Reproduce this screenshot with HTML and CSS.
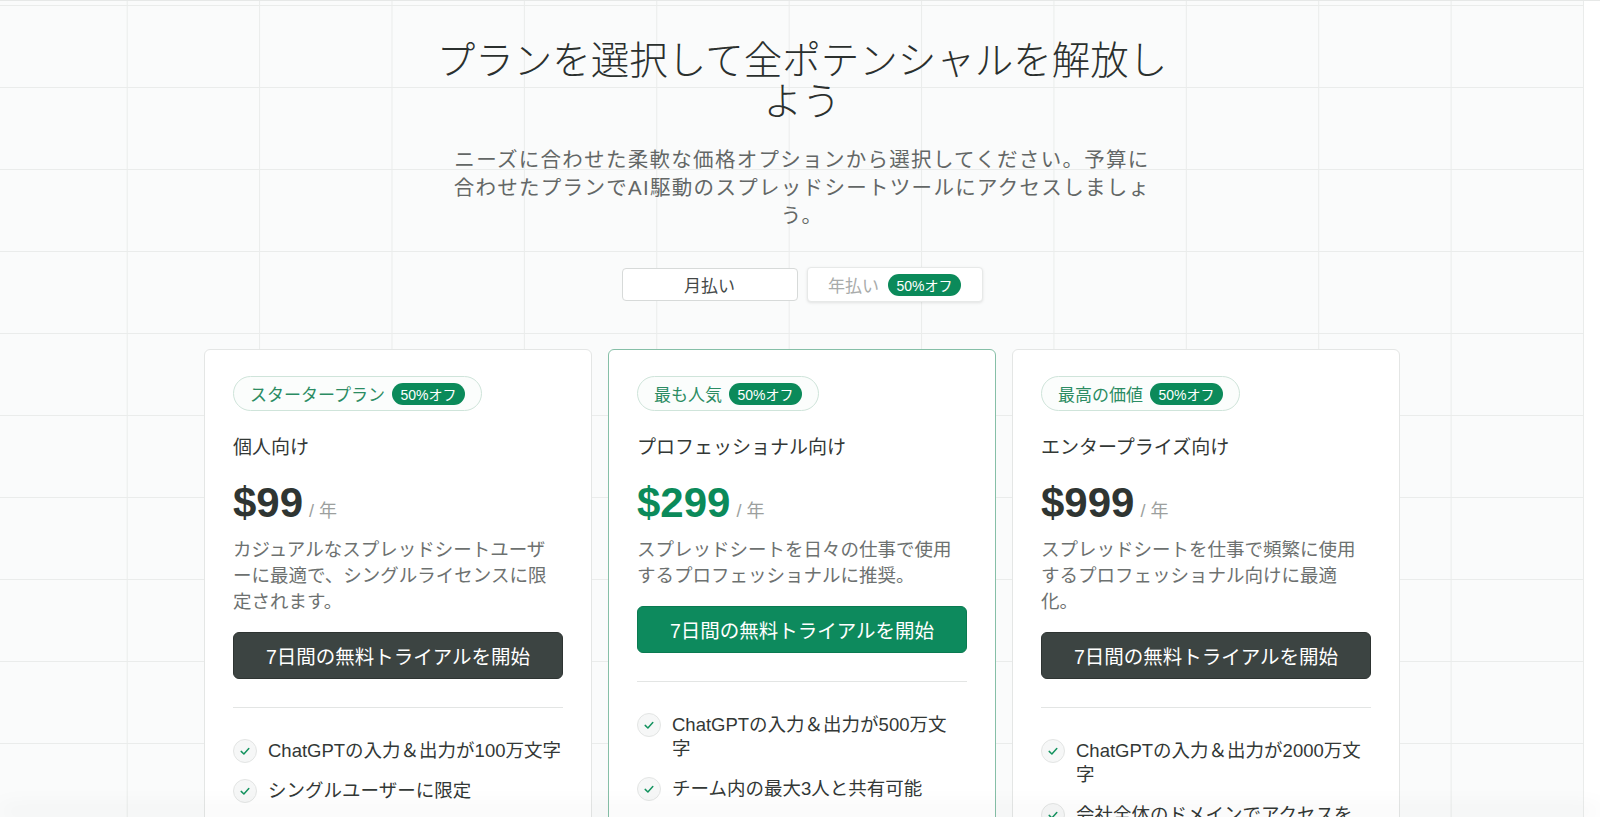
FILE: index.html
```html
<!DOCTYPE html>
<html lang="ja">
<head>
<meta charset="utf-8">
<title>料金プラン</title>
<link rel="stylesheet" href="styles.css">
</head>
<body>
<main class="page">
  <header class="hero">
    <h1 class="title">プランを選択して全ポテンシャルを解放しよう</h1>
    <p class="lead">ニーズに合わせた柔軟な価格オプションから選択してください。予算に合わせたプランでAI駆動のスプレッドシートツールにアクセスしましょう。</p>
  </header>

  <div class="toggle">
    <button class="tab">月払い</button>
    <button class="tab tab-active">年払い <span class="badge">50%オフ</span></button>
  </div>

  <section class="plans">
    <article class="card">
      <div class="pill">スタータープラン <span class="badge">50%オフ</span></div>
      <h2 class="plan-name">個人向け</h2>
      <div class="price"><span class="amount">$99</span><span class="per">/ 年</span></div>
      <p class="desc">カジュアルなスプレッドシートユーザーに最適で、シングルライセンスに限定されます。</p>
      <button class="cta">7日間の無料トライアルを開始</button>
      <hr class="divider">
      <ul class="features">
        <li><span class="check"><svg viewBox="0 0 12 12"><polyline points="2.2,6.4 4.9,9 9.8,3.6"/></svg></span><span>ChatGPTの入力＆出力が100万文字</span></li>
        <li><span class="check"><svg viewBox="0 0 12 12"><polyline points="2.2,6.4 4.9,9 9.8,3.6"/></svg></span><span>シングルユーザーに限定</span></li>
      </ul>
    </article>

    <article class="card card-featured">
      <div class="pill">最も人気 <span class="badge">50%オフ</span></div>
      <h2 class="plan-name">プロフェッショナル向け</h2>
      <div class="price"><span class="amount amount-green">$299</span><span class="per">/ 年</span></div>
      <p class="desc">スプレッドシートを日々の仕事で使用するプロフェッショナルに推奨。</p>
      <button class="cta cta-green">7日間の無料トライアルを開始</button>
      <hr class="divider">
      <ul class="features">
        <li><span class="check"><svg viewBox="0 0 12 12"><polyline points="2.2,6.4 4.9,9 9.8,3.6"/></svg></span><span>ChatGPTの入力＆出力が500万文<br>字</span></li>
        <li><span class="check"><svg viewBox="0 0 12 12"><polyline points="2.2,6.4 4.9,9 9.8,3.6"/></svg></span><span>チーム内の最大3人と共有可能</span></li>
        <li><span class="check"><svg viewBox="0 0 12 12"><polyline points="2.2,6.4 4.9,9 9.8,3.6"/></svg></span><span>メールサポート</span></li>
      </ul>
    </article>

    <article class="card">
      <div class="pill">最高の価値 <span class="badge">50%オフ</span></div>
      <h2 class="plan-name">エンタープライズ向け</h2>
      <div class="price"><span class="amount">$999</span><span class="per">/ 年</span></div>
      <p class="desc">スプレッドシートを仕事で頻繁に使用するプロフェッショナル向けに最適化。</p>
      <button class="cta">7日間の無料トライアルを開始</button>
      <hr class="divider">
      <ul class="features">
        <li><span class="check"><svg viewBox="0 0 12 12"><polyline points="2.2,6.4 4.9,9 9.8,3.6"/></svg></span><span>ChatGPTの入力＆出力が2000万文字</span></li>
        <li><span class="check"><svg viewBox="0 0 12 12"><polyline points="2.2,6.4 4.9,9 9.8,3.6"/></svg></span><span>会社全体のドメインでアクセスを可能に</span></li>
      </ul>
    </article>
  </section>
</main>
<div class="bottom-shade"></div>
</body>
</html>
```

FILE: styles.css
```css
* {
  box-sizing: border-box;
}

html,
body {
  margin: 0;
}

body {
  font-family: "Liberation Sans", "Noto Sans CJK JP", sans-serif;
  color: #2f3432;
  background-color: #fafbfb;
  background-image:
    linear-gradient(to right, rgba(255, 255, 255, 0) 1584px, #ffffff 1584px),
    linear-gradient(to right, #eaeceb 1px, transparent 1px),
    linear-gradient(to bottom, #eaeceb 1px, transparent 1px);
  background-size: 100% 100%, 132.4px 100%, 100% 82px;
  background-position: 0 0, -5.7px 0, 0 5px;
  background-repeat: no-repeat, repeat-x, repeat-y;
}

.page {
  border-top: 1px solid #e6e8e7;
  padding: 0 0 60px 4px;
}

.hero {
  text-align: center;
  padding-top: 39px;
}

.title {
  max-width: 760px;
  margin: 0 auto;
  font-size: 38.5px;
  line-height: 41px;
  font-weight: 300;
  color: #2b302e;
}

.lead {
  max-width: 712px;
  margin: 24px auto 0;
  font-size: 20.5px;
  letter-spacing: 1.3px;
  line-height: 28px;
  color: #636766;
}

.toggle {
  display: flex;
  justify-content: center;
  align-items: center;
  gap: 9px;
  margin-top: 37px;
}

.tab {
  width: 176px;
  height: 33px;
  padding: 0;
  display: flex;
  align-items: center;
  justify-content: center;
  gap: 9px;
  background: #ffffff;
  border: 1px solid #d7dad9;
  border-radius: 4px;
  font-family: inherit;
  font-size: 17px;
  color: #444847;
}

.tab-active {
  height: 35px;
  border-color: #e7e9e8;
  box-shadow: 0 1px 3px rgba(0, 0, 0, 0.1);
  color: #a8abaa;
}

.badge {
  display: inline-flex;
  align-items: center;
  height: 22px;
  padding: 0 8.5px;
  border-radius: 11px;
  background: #0b8a5a;
  color: #ffffff;
  font-size: 14px;
}

.plans {
  display: grid;
  grid-template-columns: repeat(3, 388px);
  justify-content: center;
  align-items: start;
  gap: 16px;
  margin-top: 47px;
}

.card {
  background: #ffffff;
  border: 1px solid #e4e6e5;
  border-radius: 6px;
  padding: 26px 28px 28px;
}

.card-featured {
  border-color: #86bfa7;
}

.pill {
  display: inline-flex;
  align-items: center;
  gap: 7px;
  height: 35px;
  padding: 0 16px;
  border: 1px solid #cfe4da;
  border-radius: 18px;
  background: #fbfdfc;
  color: #2b8c63;
  font-size: 17px;
}

.plan-name {
  margin: 24px 0 0;
  font-size: 19px;
  line-height: 26px;
  font-weight: 400;
  color: #333836;
}

.price {
  display: flex;
  align-items: baseline;
  gap: 6px;
  margin-top: 18px;
  line-height: 48px;
}

.amount {
  font-size: 42px;
  font-weight: 700;
  color: #2f3532;
}

.amount-green {
  color: #0b8a5a;
}

.per {
  font-size: 18px;
  color: #9c9f9e;
}

.desc {
  margin: 2px 0 0;
  font-size: 18.5px;
  line-height: 26px;
  color: #6d7170;
  line-break: loose;
}

.cta {
  display: block;
  width: 100%;
  height: 47px;
  margin-top: 17px;
  border: 1px solid #2e3432;
  border-radius: 6px;
  background: #3c4442;
  color: #ffffff;
  font-family: inherit;
  font-size: 19.5px;
}

.cta-green {
  background: #0d8a5d;
  border-color: #0a7a51;
}

.divider {
  height: 0;
  margin: 28px 0 0;
  border: 0;
  border-top: 1px solid #e3e5e4;
}

.features {
  list-style: none;
  margin: 31px 0 0;
  padding: 0;
  display: flex;
  flex-direction: column;
  gap: 16px;
}

.features li {
  display: flex;
  gap: 11px;
  font-size: 18.5px;
  line-height: 24px;
  color: #333836;
}

.check {
  flex: none;
  width: 24px;
  height: 24px;
  display: flex;
  align-items: center;
  justify-content: center;
  border-radius: 50%;
  background: #f6f7f7;
  border: 1px solid #e3e5e4;
}

.check svg {
  width: 12px;
  height: 12px;
  fill: none;
  stroke: #14935f;
  stroke-width: 1.5;
  stroke-linecap: round;
  stroke-linejoin: round;
}

.bottom-shade {
  position: fixed;
  left: 0;
  right: 0;
  bottom: 0;
  height: 5px;
  background: #ffffff;
  box-shadow: 0 -8px 22px rgba(0, 0, 0, 0.1);
}
```
